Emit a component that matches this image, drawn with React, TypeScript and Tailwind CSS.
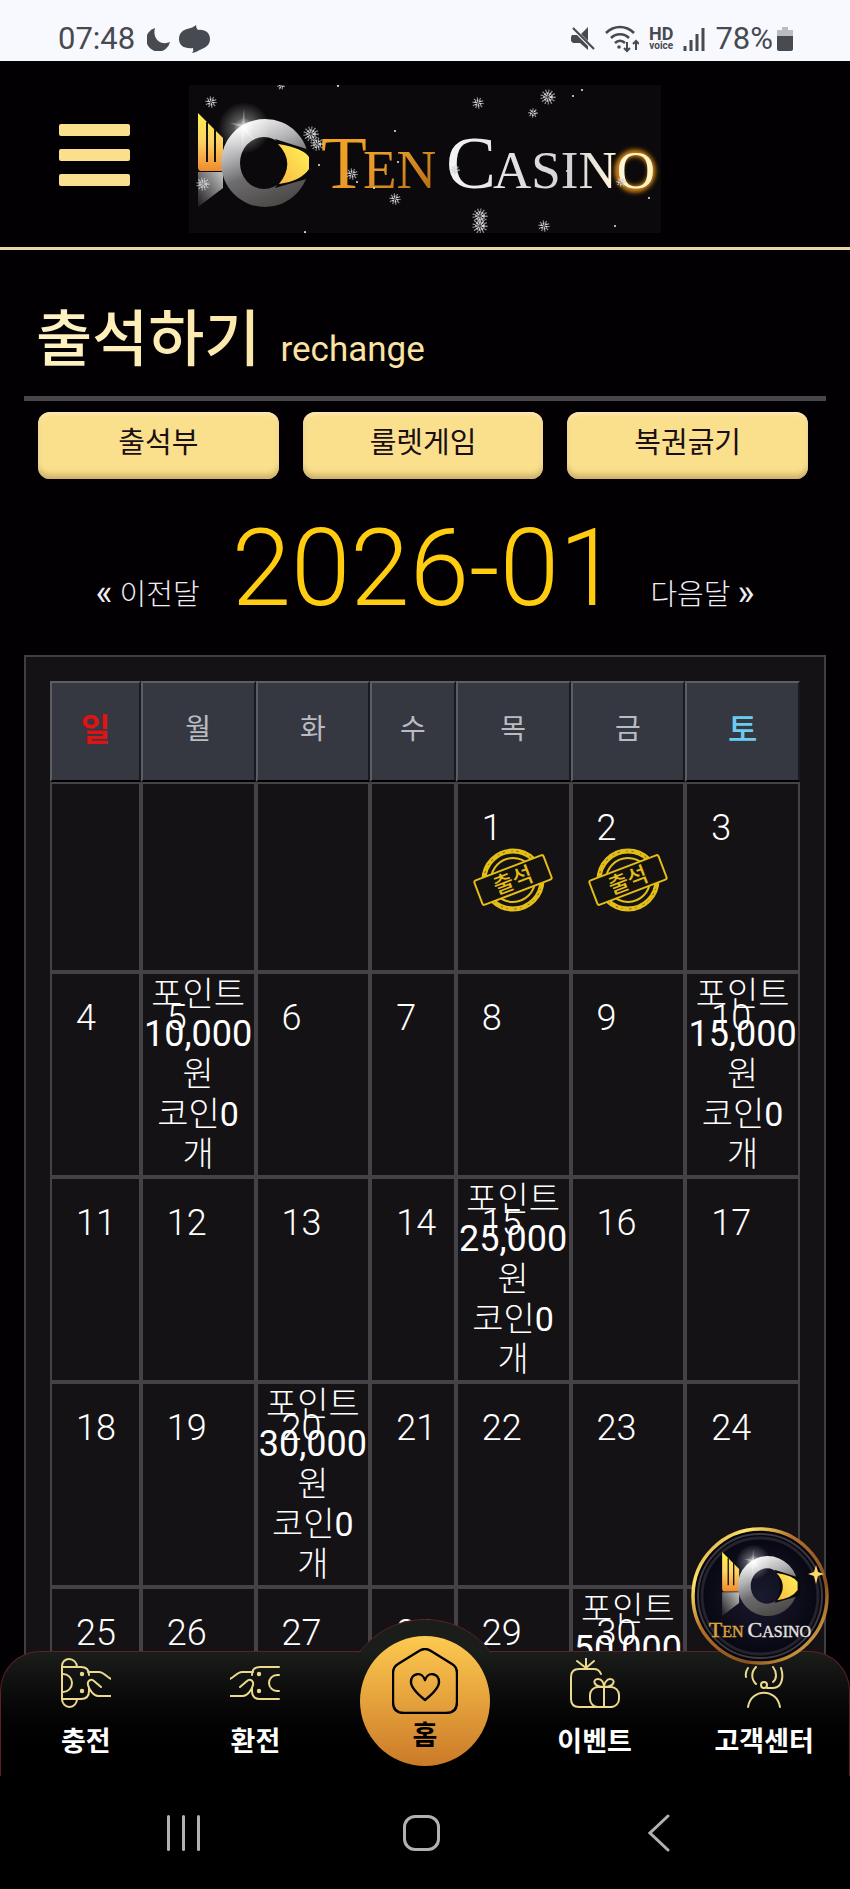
import { useState } from "react";
import type { ReactNode } from "react";

type Reward = { point: string; coin: number };

const days = ["일", "월", "화", "수", "목", "금", "토"];

// Rewards given for the number of attended days
const rewards: Record<number, Reward> = {
    5: { point: "10,000", coin: 0 },
    10: { point: "15,000", coin: 0 },
    15: { point: "25,000", coin: 0 },
    20: { point: "30,000", coin: 0 },
    30: { point: "50,000", coin: 0 },
};

const attended = [1, 2];

// Build the weeks of a month, null is an empty cell
const getWeeks = (year: number, month: number) => {
    const first = new Date(year, month, 1).getDay();
    const total = new Date(year, month + 1, 0).getDate();
    const cells: (number | null)[] = [];
    for (let i = 0; i < first; i++) cells.push(null);
    for (let d = 1; d <= total; d++) cells.push(d);
    while (cells.length % 7 !== 0) cells.push(null);

    const weeks: (number | null)[][] = [];
    for (let i = 0; i < cells.length; i += 7) weeks.push(cells.slice(i, i + 7));
    return weeks;
};

const StatusBar = () => (
    <div className="flex h-[61px] shrink-0 items-center justify-between bg-[#f8f9ff] pt-4 pl-[58px] pr-[57px] text-[#474a50]">
        <div className="flex items-center gap-3">
            <span className="text-[31px] leading-8">07:48</span>
            <div className="flex items-center gap-2">
                <svg className="h-6 w-6" viewBox="0 0 24 24" fill="currentColor">
                    <path d="M8 1A12 12 0 1 0 23 15C14 19 5 12 8 1z" />
                </svg>
                <svg className="h-7 w-8" viewBox="0 0 32 28" fill="currentColor">
                    <path d="M17 0Q17 3 19 5C26 4 31 8 31 14C31 20 27 22 23 24C20 25 16 28 13 28Q15 26 14 23C6 24 0 21 0 14C0 8 4 5 8 4C12 3 15 2 17 0z" />
                </svg>
            </div>
        </div>
        <div className="flex items-center gap-2.5">
            <svg className="h-6 w-6" viewBox="0 0 24 24" fill="currentColor">
                <path d="M17 0v14L10 7zM1 8h5l11 11v4l-8-7H2L0 14V10z" />
                <path d="M2 1l21 21" fill="none" stroke="currentColor" strokeWidth="2.2" />
            </svg>
            <svg className="h-7 w-[34px]" viewBox="0 0 34 28" fill="none" stroke="currentColor" strokeWidth="2.6">
                <path d="M1 8C9 0 21 0 29 8M6 13c5-5 13-5 18 0M10 18c3-3 7-3 10 0" />
                <circle cx="14" cy="22" r="1.8" fill="currentColor" stroke="none" />
                <path d="M22 17v9M19 23l3 3 3-3M31 25v-9M28 19l3-3 3 3" strokeWidth="2" />
            </svg>
            <div className="flex flex-col items-center font-bold">
                <span className="text-[18px] leading-[14px]">HD</span>
                <span className="text-[10px] leading-[10px]">voice</span>
            </div>
            <svg className="h-6 w-[22px]" viewBox="0 0 22 24" stroke="currentColor" strokeWidth="3">
                <path d="M2 19v5M8 13v11M14 7v17M20 1v23" />
            </svg>
            <div className="flex items-center gap-1">
                <span className="text-[31px] leading-8">78%</span>
                <svg className="h-6 w-4" viewBox="0 0 16 24" fill="currentColor">
                    <path d="M5 0h6v3h5v8H0V3h5z" opacity=".35" />
                    <path d="M0 9h16v13q0 2-2 2H2q-2 0-2-2z" />
                </svg>
            </div>
        </div>
    </div>
);

// Fish shaped emblem, shared by the header logo and the floating badge
const Emblem = () => (
    <g>
        <defs>
            <linearGradient id="wing" x1="0" y1="0" x2="0" y2="1">
                <stop offset="0" stopColor="#fff04e" />
                <stop offset=".5" stopColor="#fdd264" />
                <stop offset="1" stopColor="#f08a2c" />
            </linearGradient>
            <linearGradient id="ring" x1=".2" y1="0" x2=".6" y2="1">
                <stop offset="0" stopColor="#ffffff" />
                <stop offset=".35" stopColor="#b4b4b6" />
                <stop offset=".6" stopColor="#6d6c6e" />
                <stop offset="1" stopColor="#4b4846" />
            </linearGradient>
            <linearGradient id="tail" x1="1" y1="0" x2="0" y2="1">
                <stop offset="0" stopColor="#c4c4c4" />
                <stop offset="1" stopColor="#1c1b1c" />
            </linearGradient>
            <linearGradient id="eye" x1="1" y1="0" x2="0" y2="1">
                <stop offset="0" stopColor="#fff45a" />
                <stop offset="1" stopColor="#f9b840" />
            </linearGradient>
            <radialGradient id="flare">
                <stop offset="0" stopColor="#fff" stopOpacity=".9" />
                <stop offset=".4" stopColor="#fff" stopOpacity=".3" />
                <stop offset="1" stopColor="#fff" stopOpacity="0" />
            </radialGradient>
        </defs>
        <path d="M9 87H34V103L9 122z" fill="url(#tail)" />
        <path d="M9 28L34 53V86H12Q9 86 9 82z" fill="url(#wing)" />
        <path d="M18 37V77M26 44V77" stroke="#17120a" strokeWidth="2" />
        <path d="M76 34a44 44 0 1 0 0 88a44 44 0 1 0 0-88zM75 52a24 26 0 1 1 0 52a24 26 0 1 1 0-52z" fillRule="evenodd" fill="url(#ring)" />
        <path d="M86 54L124 66V92L86 103Q102 78 86 54z" fill="#0b090b" />
        <path d="M89 59Q114 63 120 72V84Q112 96 90 99Q107 78 89 59z" fill="url(#eye)" />
        <circle cx="55" cy="43" r="26" fill="url(#flare)" />
        <path d="M55 24l1 16 12-4-11 7 9 13-11-11-1 18-2-18-10 6 9-9-10-4 12 1z" fill="#fff" opacity=".35" />
    </g>
);

// x, y, radius of every snowflake in the logo
const flakes = [
    [22, 17, 6], [289, 18, 6], [359, 12, 8], [344, 28, 5], [122, 49, 8], [128, 59, 7], [163, 89, 6],
    [206, 114, 6], [291, 131, 8], [291, 141, 8], [355, 141, 6], [14, 99, 7], [266, 85, 5], [432, 97, 5], [92, 1, 4],
];

const dots = [
    [384, 11], [393, 5], [206, 46], [130, 80], [209, 77], [426, 141], [460, 113], [116, 147], [149, 1], [185, 103], [168, 97], [378, 86],
];

const Logo = () => (
    <svg className="block w-full" viewBox="0 0 472 148" role="img" aria-label="Ten Casino">
        <defs>
            <linearGradient id="gold" x1="0" y1="0" x2="1" y2="1">
                <stop offset="0" stopColor="#f7a821" />
                <stop offset=".5" stopColor="#e8992a" />
                <stop offset="1" stopColor="#a8650e" />
            </linearGradient>
            <linearGradient id="silver" x1="0" y1="0" x2="1" y2="0">
                <stop offset="0" stopColor="#f4f4f6" />
                <stop offset=".6" stopColor="#d2d2d6" />
                <stop offset=".8" stopColor="#fff6dd" />
                <stop offset="1" stopColor="#fff3c0" />
            </linearGradient>
            <filter id="glow" x="-40%" y="-40%" width="180%" height="180%">
                <feGaussianBlur stdDeviation="2.5" />
            </filter>
        </defs>
        <rect width="472" height="148" fill="#0b090b" />
        <Emblem />
        <ellipse cx="446" cy="86" rx="17" ry="18" fill="none" stroke="#f59b18" strokeWidth="6" filter="url(#glow)" />
        <g fontFamily="Liberation Serif, serif">
            <text x="132" y="103" fontSize="75" fill="url(#gold)">T<tspan x="174" fontSize="55">EN</tspan></text>
            <text x="257" y="103" fontSize="75" fill="url(#silver)">C<tspan x="304" fontSize="53">ASINO</tspan></text>
        </g>
        {flakes.map(([x, y, r], i) => (
            <g key={i} stroke="#cfcfd4" fill="none">
                <circle cx={x} cy={y} r={r * 0.7} strokeWidth={r * 0.5} strokeDasharray="1 1.6" opacity=".7" />
                <circle cx={x} cy={y} r={r * 0.35} strokeWidth={r * 0.5} strokeDasharray="1.2 .8" />
            </g>
        ))}
        {dots.map(([x, y], i) => (
            <circle key={i} cx={x} cy={y} r="1.1" fill="#ddd" />
        ))}
    </svg>
);

const Stamp = () => (
    <svg className="mx-auto block h-[66px] w-20" viewBox="0 0 80 66" role="img" aria-label="출석">
        <g fill="none" stroke="#e3bd18">
            <circle cx="40" cy="32" r="29" strokeWidth="5" />
            <circle cx="40" cy="32" r="29" strokeWidth="1" stroke="#5c4c0c" strokeDasharray="2 7 1 4" />
            <circle cx="40" cy="32" r="22" strokeWidth="2" />
        </g>
        <g transform="rotate(-21 40 32)">
            <rect x="3" y="19" width="74" height="26" rx="2" fill="#141210" stroke="#e3bd18" strokeWidth="2" />
            <text x="40" y="40" textAnchor="middle" fontSize="22" fontWeight="500" fill="#e3bd18" fontFamily="Noto Sans CJK KR, sans-serif">출석</text>
        </g>
    </svg>
);

const DayCell = ({ day }: { day: number | null }) => {
    const reward = day ? rewards[day] : undefined;

    if (!day) return <td className="border-2 border-[#454247]" />;

    if (reward) {
        return (
            <td className="relative border-2 border-[#454247] p-0 text-center align-top">
                <span className="absolute left-6 top-6 text-[36px] font-light">{day}</span>
                <div className="font-light">포인트</div>
                <div className="text-[36px]">{reward.point}</div>
                <div className="font-light">원</div>
                <div><span className="font-light">코인</span>{reward.coin}</div>
                <div className="font-light">개</div>
            </td>
        );
    }

    return (
        <td className="border-2 border-[#454247] p-0 pt-6 align-top text-[36px] font-light">
            <div className="pl-6">{day}</div>
            {attended.includes(day) && <Stamp />}
        </td>
    );
};

const Calendar = ({ year, month }: { year: number; month: number }) => (
    <div className="mx-6 border-2 border-[#403e42] bg-[#151216] p-6">
        <table className="w-full table-fixed border-separate border-spacing-0 text-[34px] leading-10 text-white">
            <thead>
                <tr className="h-[101px] bg-[#363841]">
                    {days.map((name, i) => (
                        <th
                            key={name}
                            scope="col"
                            className={`border-2 border-t-[#5c5e64] border-l-[#5c5e64] border-r-[#171a22] border-b-black p-0 pb-1 ${
                                i === 0 ? "w-[12.1%] text-[32px] font-bold text-[#e01212]"
                                    : i === 6 ? "text-[32px] font-medium text-[#6ccbf2]"
                                        : "text-[28px] font-normal text-[#b9bdc2]"
                            } ${i === 3 ? "w-[11.4%]" : ""}`}
                        >
                            {name}
                        </th>
                    ))}
                </tr>
            </thead>
            <tbody>
                {getWeeks(year, month).map((week, i) => (
                    <tr key={i} className={i === 0 ? "h-[190px]" : "h-[205px]"}>
                        {week.map((day, j) => <DayCell key={j} day={day} />)}
                    </tr>
                ))}
            </tbody>
        </table>
    </div>
);

const Hand = () => (
    <>
        <path d="M1 9H20q8 0 8 8M1 41H20q8 0 8-8V30" />
        <circle cx="21" cy="16" r="1.2" fill="currentColor" />
        <circle cx="21" cy="33" r="1.2" fill="currentColor" />
        <path d="M27 14H38C42 14 45 18 50 21M40 29L33 23C30 20 26 23 27 27C28 32 33 38 37 38H50" />
    </>
);

const NavLink = ({ label, children }: { label: string; children: ReactNode }) => (
    <a href="#" className="flex flex-1 flex-col items-center gap-4 pt-1.5">
        <svg className="h-[50px] w-[50px] text-[#ecd98c]" viewBox="0 0 50 50" fill="none" stroke="currentColor" strokeWidth="2" strokeLinecap="round">
            {children}
        </svg>
        <span className="text-[27px] leading-9 font-bold whitespace-nowrap text-white">{label}</span>
    </a>
);

const BottomNav = () => (
    <nav className="relative -mt-10 h-[125px] shrink-0 rounded-t-[40px] border border-b-0 border-[#5a2225] bg-linear-to-b from-[#1b1d1b] to-black">
        {/* bump behind the home button */}
        <div className="absolute -top-[33px] left-1/2 h-[34px] w-[142px] -translate-x-1/2 overflow-hidden">
            <div className="-mx-3 h-[166px] rounded-full border border-[#5a2225] bg-[#1b1d1b]" />
        </div>
        <div className="relative flex">
            <NavLink label="충전">
                <path d="M1 41V8A7 7 0 0 1 8 1A8 8 0 0 1 16 9M1 41A7.500 8 0 0 0 16 41M2 16A9 9 0 0 1 2 34" />
                <Hand />
            </NavLink>
            <NavLink label="환전">
                <g transform="matrix(-1 0 0 1 50 0)">
                    <Hand />
                    <path d="M1 17H3A8 8 0 0 1 3 33H1" />
                </g>
            </NavLink>
            <div className="flex-1">
                <a
                    href="#"
                    className="absolute -top-4 left-1/2 flex h-[130px] w-[130px] -translate-x-1/2 flex-col items-center rounded-full bg-linear-to-b from-[#fdca50] to-[#cb7a28] pt-3 text-black"
                >
                    <svg className="h-[66px] w-[66px]" viewBox="0 0 66 66" fill="none" stroke="currentColor" strokeWidth="2.4" strokeLinejoin="round">
                        <path d="M27 3Q33 -1 39 3L60 16Q65 19 65 25V54Q65 65 54 65H12Q1 65 1 54V25Q1 19 6 16z" />
                        <path d="M33 52C28 48 19 40 19 34C19 25 30 23 33 32C36 23 47 25 47 34C47 40 38 48 33 52z" />
                    </svg>
                    <span className="mt-1 text-[27px] leading-9 font-bold">홈</span>
                </a>
            </div>
            <NavLink label="이벤트">
                <path d="M31 16Q29 11 24 11H9Q1 11 1 19V41Q1 49 9 49H42M16 10V0M16 10L7 3M16 10L24 3" />
                <rect x="20" y="29" width="29" height="20" rx="8" />
                <path d="M34 29V49M34 29C23 29 22 21 28 21C32 21 34 25 34 29C34 25 37 21 40 21C46 21 45 29 34 29" />
            </NavLink>
            <NavLink label="고객센터">
                <path d="M9 49C12 30 38 30 41 49M28 30H34C43 30 45 19 42 10M17 9C12 14 12 21 17 26M34 9C38 14 38 21 34 24M9 10Q6 14 7 19" />
                <circle cx="25" cy="27" r="3" />
            </NavLink>
        </div>
        <a href="#" aria-label="Ten Casino" className="absolute -top-[125px] right-5 block h-[138px] w-[138px]">
            <svg className="h-full w-full" viewBox="0 0 138 138">
                <defs>
                    <linearGradient id="rim" x1="0" y1="0" x2="1" y2="1">
                        <stop offset="0" stopColor="#b0641c" />
                        <stop offset=".2" stopColor="#ffe76a" />
                        <stop offset=".4" stopColor="#b5702a" />
                        <stop offset=".7" stopColor="#8a501c" />
                        <stop offset="1" stopColor="#ffcf60" />
                    </linearGradient>
                    <radialGradient id="night">
                        <stop offset="0" stopColor="#1a1a30" />
                        <stop offset="1" stopColor="#05050e" />
                    </radialGradient>
                    <linearGradient id="badgeText" x1="0" y1="0" x2="1" y2="0">
                        <stop offset=".32" stopColor="#dca53a" />
                        <stop offset=".36" stopColor="#e4e4ea" />
                    </linearGradient>
                </defs>
                <circle cx="69" cy="69" r="67" fill="url(#night)" stroke="url(#rim)" strokeWidth="3.500" />
                <circle cx="69" cy="69" r="62" fill="none" stroke="#3f3a40" strokeWidth="2" />
                <circle cx="69" cy="69" r="58" fill="none" stroke="#24222c" strokeWidth="3" />
                <g transform="translate(25 6) scale(.68)"><Emblem /></g>
                <path d="M125 38l2 7 6 2-6 2-2 8-2-8-6-2 6-2z" fill="#ffd968" />
                <text x="69" y="110" textAnchor="middle" fontSize="22" fontFamily="Liberation Serif, serif" fill="url(#badgeText)" stroke="url(#badgeText)" strokeWidth=".4">
                    T<tspan fontSize="16">EN </tspan>C<tspan fontSize="16">ASINO</tspan>
                </text>
            </svg>
        </a>
    </nav>
);

const SystemBar = () => (
    <div className="flex h-[113px] shrink-0 items-center bg-black pl-16 pr-[72px] text-[#b2b0b2]">
        <button aria-label="Recents" className="flex flex-1 justify-center gap-3">
            <span className="h-9 w-[3px] rounded bg-current" />
            <span className="h-9 w-[3px] rounded bg-current" />
            <span className="h-9 w-[3px] rounded bg-current" />
        </button>
        <button aria-label="Home" className="flex flex-1 justify-center">
            <span className="h-9 w-[37px] rounded-xl border-3 border-current" />
        </button>
        <button aria-label="Back" className="flex flex-1 justify-center">
            <svg className="h-[38px] w-[22px]" viewBox="0 0 22 38" fill="none" stroke="currentColor" strokeWidth="3" strokeLinecap="round">
                <path d="M20 2L2 19L20 36" />
            </svg>
        </button>
    </div>
);

const App = () => {
    // Month shown in the calendar, 0 is january
    const [date, setDate] = useState({ year: 2026, month: 0 });

    const move = (step: number) => setDate((prev) => {
        const next = new Date(prev.year, prev.month + step, 1);
        return { year: next.getFullYear(), month: next.getMonth() };
    });

    return (
        <div className="flex h-screen flex-col bg-[#020003] font-[Roboto,'Noto_Sans_CJK_KR',sans-serif]">
            <StatusBar />

            <header className="flex shrink-0 items-start border-b-3 border-[#e9d5a5] pb-[14px] pl-[59px] pt-6">
                <button aria-label="Menu" className="mt-[39px] flex w-[71px] flex-col gap-[13px]">
                    <span className="h-3 rounded-xs bg-[#fae08c]" />
                    <span className="h-3 rounded-xs bg-[#fae08c]" />
                    <span className="h-3 rounded-xs bg-[#fae08c]" />
                </button>
                <a href="#" className="ml-[59px] w-[472px]">
                    <Logo />
                </a>
            </header>

            <main className="min-h-0 flex-1 overflow-y-auto [scrollbar-width:none]">
                <div className="mx-6 flex items-baseline gap-5 border-b-5 border-[#48464a] px-3 pb-[14px] pt-12">
                    <h1 className="bg-linear-to-r from-[#fff3c4] to-[#fbe7a8] bg-clip-text text-[61px] leading-[84px] font-medium text-transparent">출석하기</h1>
                    <span className="text-[35px] leading-10 text-[#fbe3a4]">rechange</span>
                </div>

                <div className="mt-[11px] grid grid-cols-3 gap-6 pl-[38px] pr-[42px]">
                    {["출석부", "룰렛게임", "복권긁기"].map((name) => (
                        <button
                            key={name}
                            className="h-[67px] rounded-xl bg-[#fae08c] pb-1 text-[29px] text-[#1a0f14] shadow-[inset_0_-6px_6px_-2px_#c9ab68,inset_0_2px_4px_#ffe9bd]"
                        >
                            {name}
                        </button>
                    ))}
                </div>

                <div className="mt-[26px] mb-[23px] flex items-baseline justify-center gap-8 text-[29px] leading-10 font-light text-[#efedf2]">
                    <button onClick={() => move(-1)}><span className="text-[36px] font-normal">«</span> 이전달</button>
                    <h2 className="text-[107px] leading-[127px] text-[#ffcc10]">
                        {date.year}-{String(date.month + 1).padStart(2, "0")}
                    </h2>
                    <button onClick={() => move(1)}>다음달 <span className="text-[36px] font-normal">»</span></button>
                </div>

                <Calendar year={date.year} month={date.month} />
            </main>

            <BottomNav />
            <SystemBar />
        </div>
    );
};

export default App;
